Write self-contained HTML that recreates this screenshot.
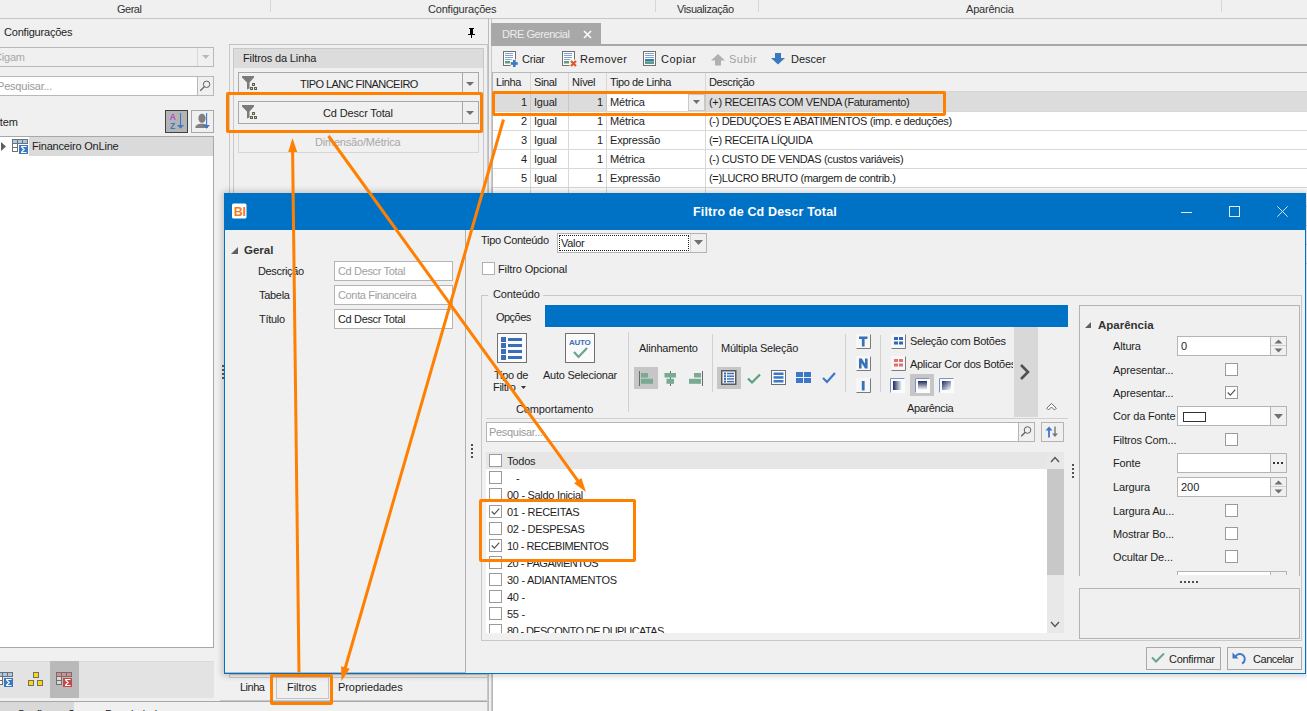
<!DOCTYPE html>
<html><head><meta charset="utf-8"><style>
html,body{margin:0;padding:0;width:1307px;height:711px;overflow:hidden;background:#f0f0f0;position:relative;font-family:"Liberation Sans", sans-serif;}
.a{position:absolute;}
.t{position:absolute;white-space:nowrap;font-family:"Liberation Sans", sans-serif;letter-spacing:-0.2px;}
svg.a{overflow:visible;}
</style></head><body>
<div class="t" style="left:117px;top:4px;font-size:11px;line-height:11px;color:#333;letter-spacing:-0.5px;">Geral</div><div class="t" style="left:428px;top:4px;font-size:11px;line-height:11px;color:#333;">Configurações</div><div class="t" style="left:677px;top:4px;font-size:11px;line-height:11px;color:#333;letter-spacing:-0.4px;">Visualização</div><div class="t" style="left:966px;top:4px;font-size:11px;line-height:11px;color:#333;">Aparência</div><div class="a" style="left:270px;top:0px;width:1px;height:12px;background:#d6d6d6;"></div><div class="a" style="left:655px;top:0px;width:1px;height:12px;background:#d6d6d6;"></div><div class="a" style="left:758px;top:0px;width:1px;height:12px;background:#d6d6d6;"></div><div class="a" style="left:1221px;top:0px;width:1px;height:12px;background:#d6d6d6;"></div><div class="a" style="left:0px;top:18px;width:1307px;height:1px;background:#c6c6c6;"></div><div class="t" style="left:4px;top:27px;font-size:11px;line-height:11px;color:#1e1e1e;">Configurações</div><svg class="a" style="left:467px;top:28px;" width="9" height="10" viewBox="0 0 9 10"><path d="M2 0h5v1h-1v5h2v1h-3v3h-1v-3h-3v-1h2v-5h-1z" fill="#000"/></svg><div class="a" style="left:488px;top:18px;width:1px;height:693px;background:#bcbcbc;"></div><div class="a" style="left:-1px;top:47px;width:215px;height:20px;background:#f0f0f0;border:1px solid #b8b8b8;box-sizing:border-box;"></div><div class="a" style="left:197px;top:48px;width:1px;height:18px;background:#d8d8d8;"></div><svg class="a" style="left:202px;top:55px;" width="8" height="4" viewBox="0 0 8 4"><path d="M0 0h7.5l-3.75 4z" fill="#b8b8b8"/></svg><div class="t" style="left:-6px;top:52px;font-size:11px;line-height:11px;color:#a8a8a8;">Cigam</div><div class="a" style="left:-1px;top:76px;width:215px;height:20px;background:#ffffff;border:1px solid #b8b8b8;box-sizing:border-box;"></div><div class="a" style="left:197px;top:76px;width:17px;height:20px;background:#f0f0f0;border:1px solid #b8b8b8;box-sizing:border-box;"></div><svg class="a" style="left:199px;top:79px;" width="12" height="13" viewBox="0 0 12 13"><circle cx="7.6" cy="5.3" r="3.2" fill="none" stroke="#606060" stroke-width="1"/><path d="M5.4 7.6L1.3 11.7" stroke="#606060" stroke-width="1.3"/></svg><div class="t" style="left:-3px;top:81px;font-size:11px;line-height:11px;color:#9a9a9a;">Pesquisar...</div><div class="t" style="left:-3px;top:117px;font-size:11px;line-height:11px;color:#1e1e1e;">Item</div><div class="a" style="left:165px;top:110px;width:23px;height:23px;background:#b4b4b4;border:1px solid #404040;box-sizing:border-box;"></div><svg class="a" style="left:169px;top:112px;" width="16" height="18" viewBox="0 0 16 18"><text x="0.8" y="8.3" font-family="Liberation Sans" font-weight="bold" font-size="8.5" fill="#b84cc8">A</text><text x="1" y="17" font-family="Liberation Sans" font-weight="bold" font-size="8.5" fill="#3c78c8">Z</text><path d="M11.5 1v12" stroke="#3c78c8" stroke-width="1.1"/><path d="M8 13l3.5 3.8 3.5-3.8z" fill="#3c78c8"/></svg><div class="a" style="left:191px;top:110px;width:23px;height:23px;background:#f0f0f0;border:1px solid #a8a8a8;box-sizing:border-box;"></div><svg class="a" style="left:194px;top:112px;" width="17" height="18" viewBox="0 0 17 18"><ellipse cx="8" cy="6.3" rx="3.6" ry="4.6" fill="#808080"/><path d="M1.2 16c0.5-3 2.5-4.3 6.8-4.3s5.5 1.3 6 4.3z" fill="#808080"/><path d="M12.6 1v12" stroke="#3c78c8" stroke-width="1.1"/><path d="M9.2 13l3.4 3.8 3.4-3.8z" fill="#3c78c8"/></svg><div class="a" style="left:-1px;top:136px;width:215px;height:512px;background:#ffffff;border:1px solid #a8a8a8;box-sizing:border-box;"></div><div class="a" style="left:29px;top:137px;width:184px;height:19px;background:#dadada;"></div><svg class="a" style="left:1px;top:142px;" width="5" height="9" viewBox="0 0 5 9"><path d="M0 0l5 4.5-5 4.5z" fill="#606060"/></svg><svg class="a" style="left:12px;top:139px;" width="17" height="15" viewBox="0 0 17 15"><rect x="0" y="0" width="16" height="5" fill="#707070"/><rect x="1" y="1" width="4" height="3" fill="#a8c8e8"/><rect x="6" y="1" width="4" height="3" fill="#a8c8e8"/><rect x="11" y="1" width="4" height="3" fill="#a8c8e8"/><rect x="0" y="4" width="6" height="9" fill="#707070"/><rect x="1" y="5" width="4" height="3" fill="#ffffff"/><rect x="1" y="9" width="4" height="3" fill="#ffffff"/><rect x="7" y="6" width="9" height="9" fill="#3a78c0"/><path d="M9 7.5h5.5M9 13.5h5.5M9.6 8l2.6 2.5-2.6 2.5" stroke="#fff" stroke-width="1.2" fill="none"/></svg><div class="t" style="left:32px;top:141px;font-size:11px;line-height:11px;color:#1e1e1e;">Financeiro OnLine</div><div class="a" style="left:0px;top:661px;width:214px;height:37px;background:#e3e3e3;"></div><div class="a" style="left:0px;top:661px;width:214px;height:1px;background:#dadada;"></div><div class="a" style="left:50px;top:661px;width:29px;height:37px;background:#b9b9b9;"></div><svg class="a" style="left:-3px;top:672px;" width="17" height="15" viewBox="0 0 17 15"><rect x="0" y="0" width="16" height="5" fill="#707070"/><rect x="1" y="1" width="4" height="3" fill="#a8c8e8"/><rect x="6" y="1" width="4" height="3" fill="#a8c8e8"/><rect x="11" y="1" width="4" height="3" fill="#a8c8e8"/><rect x="0" y="4" width="6" height="9" fill="#707070"/><rect x="1" y="5" width="4" height="3" fill="#ffffff"/><rect x="1" y="9" width="4" height="3" fill="#ffffff"/><rect x="7" y="6" width="9" height="9" fill="#3a78c0"/><path d="M9 7.5h5.5M9 13.5h5.5M9.6 8l2.6 2.5-2.6 2.5" stroke="#fff" stroke-width="1.2" fill="none"/></svg><svg class="a" style="left:28px;top:672px;" width="15" height="15" viewBox="0 0 15 15"><rect x="5.5" y="0.5" width="5" height="5" fill="#ffd800" stroke="#707070"/><rect x="0.5" y="8.5" width="5" height="5" fill="#ffd800" stroke="#707070"/><rect x="9.5" y="8.5" width="5" height="5" fill="#ffd800" stroke="#707070"/></svg><svg class="a" style="left:56px;top:672px;" width="17" height="15" viewBox="0 0 17 15"><rect x="0" y="0" width="16" height="5" fill="#707070"/><rect x="1" y="1" width="4" height="3" fill="#d88c8c"/><rect x="6" y="1" width="4" height="3" fill="#d88c8c"/><rect x="11" y="1" width="4" height="3" fill="#d88c8c"/><rect x="0" y="4" width="6" height="9" fill="#707070"/><rect x="1" y="5" width="4" height="3" fill="#d8d8d8"/><rect x="1" y="9" width="4" height="3" fill="#d8d8d8"/><rect x="7" y="6" width="9" height="9" fill="#c84848"/><path d="M9 7.5h5.5M9 13.5h5.5M9.6 8l2.6 2.5-2.6 2.5" stroke="#fff" stroke-width="1.2" fill="none"/></svg><div class="a" style="left:0px;top:701px;width:489px;height:1px;background:#a8a8a8;"></div><div class="a" style="left:0px;top:702px;width:74px;height:10px;background:#d9d9d9;"></div><div class="t" style="left:17px;top:709px;font-size:11px;line-height:11px;color:#1e1e1e;">Configurações</div><div class="t" style="left:105px;top:709px;font-size:11px;line-height:11px;color:#1e1e1e;">Propriedades</div><div class="a" style="left:229px;top:44px;width:259px;height:631px;border:1px solid #c8c8c8;box-sizing:border-box;"></div><div class="a" style="left:229px;top:674px;width:1px;height:4px;background:#c8c8c8;"></div><div class="a" style="left:487px;top:674px;width:1px;height:38px;background:#c8c8c8;"></div><div class="a" style="left:229px;top:44px;width:260px;height:1px;background:#c0c0c0;"></div><div class="a" style="left:233px;top:48px;width:251px;height:625px;border:1px solid #c8c8c8;box-sizing:border-box;"></div><div class="a" style="left:234px;top:49px;width:249px;height:19px;background:#dcdcdc;"></div><div class="t" style="left:243px;top:53px;font-size:11px;line-height:11px;color:#1e1e1e;letter-spacing:-0.13px;">Filtros da Linha</div><div class="a" style="left:238px;top:72px;width:241px;height:23px;background:#f0f0f0;border:1px solid #a8a8a8;box-sizing:border-box;"></div><div class="a" style="left:462px;top:73px;width:1px;height:21px;background:#a8a8a8;"></div><svg class="a" style="left:466px;top:82px;" width="8" height="4" viewBox="0 0 8 4"><path d="M0 0h8l-4 4z" fill="#707070"/></svg><svg class="a" style="left:242px;top:76px;" width="16" height="15" viewBox="0 0 16 15"><path d="M0 0h12v1.5l-4.5 5v6l-2.5 1v-7l-5-5z" fill="#7a7a7a"/><rect x="10" y="7" width="3" height="3" fill="#5a5e6a"/><rect x="11" y="8" width="1" height="1" fill="#ffe000"/><rect x="8" y="11" width="3" height="3" fill="#5a5e6a"/><rect x="9" y="12" width="1" height="1" fill="#ffe000"/><rect x="12" y="11" width="3" height="3" fill="#5a5e6a"/><rect x="13" y="12" width="1" height="1" fill="#ffe000"/></svg><div class="t" style="left:300px;top:79px;font-size:11px;line-height:11px;color:#1e1e1e;letter-spacing:-0.56px;">TIPO LANC FINANCEIRO</div><div class="a" style="left:238px;top:101px;width:241px;height:23px;background:#f0f0f0;border:1px solid #a8a8a8;box-sizing:border-box;"></div><div class="a" style="left:462px;top:102px;width:1px;height:21px;background:#a8a8a8;"></div><svg class="a" style="left:466px;top:111px;" width="8" height="4" viewBox="0 0 8 4"><path d="M0 0h8l-4 4z" fill="#707070"/></svg><svg class="a" style="left:242px;top:105px;" width="16" height="15" viewBox="0 0 16 15"><path d="M0 0h12v1.5l-4.5 5v6l-2.5 1v-7l-5-5z" fill="#7a7a7a"/><rect x="10" y="7" width="3" height="3" fill="#5a5e6a"/><rect x="11" y="8" width="1" height="1" fill="#ffe000"/><rect x="8" y="11" width="3" height="3" fill="#5a5e6a"/><rect x="9" y="12" width="1" height="1" fill="#ffe000"/><rect x="12" y="11" width="3" height="3" fill="#5a5e6a"/><rect x="13" y="12" width="1" height="1" fill="#ffe000"/></svg><div class="t" style="left:323px;top:108px;font-size:11px;line-height:11px;color:#1e1e1e;letter-spacing:-0.15px;">Cd Descr Total</div><div class="a" style="left:238px;top:130px;width:241px;height:23px;border:1px solid #d6d6d6;box-sizing:border-box;"></div><div class="t" style="left:315px;top:137px;font-size:11px;line-height:11px;color:#a8a8a8;letter-spacing:-0.2px;">Dimensão/Métrica</div><div class="a" style="left:229px;top:677px;width:260px;height:1px;background:#c8c8c8;"></div><div class="a" style="left:220px;top:700px;width:269px;height:1px;background:#c8c8c8;"></div><div class="t" style="left:240px;top:682px;font-size:11px;line-height:11px;color:#1e1e1e;letter-spacing:-0.5px;">Linha</div><div class="a" style="left:276px;top:677px;width:53px;height:22px;background:#f0f0f0;border:1px solid #c4c4c4;box-sizing:border-box;"></div><div class="t" style="left:287px;top:682px;font-size:11px;line-height:11px;color:#1e1e1e;letter-spacing:-0.07px;">Filtros</div><div class="t" style="left:338px;top:682px;font-size:11px;line-height:11px;color:#1e1e1e;letter-spacing:-0.07px;">Propriedades</div><div class="a" style="left:491px;top:19px;width:1px;height:693px;background:#c8c8c8;"></div><div class="a" style="left:491px;top:23px;width:110px;height:23px;background:#a8a8a8;"></div><div class="t" style="left:502px;top:29px;font-size:11px;line-height:11px;color:#ececec;letter-spacing:-0.45px;">DRE Gerencial</div><svg class="a" style="left:583px;top:30px;" width="9" height="9" viewBox="0 0 9 9"><path d="M1 1l7 7M8 1l-7 7" stroke="#fff" stroke-width="1.5"/></svg><div class="a" style="left:491px;top:44px;width:816px;height:1px;background:#a8a8a8;"></div><div class="a" style="left:491px;top:45px;width:816px;height:1px;background:#a8a8a8;"></div><svg class="a" style="left:503px;top:51px;" width="18" height="17" viewBox="0 0 18 17"><rect x="0.5" y="0.5" width="12" height="14" fill="#fff" stroke="#707070"/><rect x="2" y="2" width="8" height="1" fill="#7fa2d0"/><rect x="2" y="4" width="8" height="1" fill="#7fa2d0"/><rect x="2" y="6" width="8" height="1" fill="#7fa2d0"/><rect x="2" y="8" width="7" height="1" fill="#7fa2d0"/><rect x="2" y="10" width="5" height="2.5" fill="#5e9e80"/><rect x="7.5" y="8.5" width="8" height="8" fill="#f0f0f0"/><rect x="10" y="9" width="2.6" height="7" fill="#3a78c0"/><rect x="7.8" y="11.2" width="7" height="2.6" fill="#3a78c0"/></svg><div class="t" style="left:522px;top:54px;font-size:11px;line-height:11px;color:#1e1e1e;">Criar</div><svg class="a" style="left:562px;top:51px;" width="18" height="17" viewBox="0 0 18 17"><rect x="0.5" y="0.5" width="12" height="14" fill="#fff" stroke="#707070"/><rect x="2" y="2" width="8" height="1" fill="#7fa2d0"/><rect x="2" y="4" width="8" height="1" fill="#7fa2d0"/><rect x="2" y="6" width="8" height="1" fill="#7fa2d0"/><rect x="2" y="8" width="7" height="1" fill="#7fa2d0"/><rect x="2" y="10" width="5" height="2.5" fill="#5e9e80"/><rect x="7.5" y="8.5" width="8" height="8" fill="#f0f0f0"/><path d="M9 10l5 5M14 10l-5 5" stroke="#e0582c" stroke-width="2.2"/></svg><div class="t" style="left:580px;top:54px;font-size:11px;line-height:11px;color:#1e1e1e;letter-spacing:0.4px;">Remover</div><svg class="a" style="left:643px;top:51px;" width="14" height="16" viewBox="0 0 14 16"><rect x="0.5" y="0.5" width="12" height="14" fill="#fff" stroke="#707070"/><rect x="2" y="2" width="9" height="1" fill="#7fa2d0"/><rect x="2" y="4" width="9" height="1" fill="#7fa2d0"/><rect x="2" y="6" width="9" height="1" fill="#7fa2d0"/><rect x="2" y="8" width="9" height="2.5" fill="#3a78c0"/><rect x="2" y="10.5" width="9" height="2.5" fill="#5e9e80"/></svg><div class="t" style="left:661px;top:54px;font-size:11px;line-height:11px;color:#1e1e1e;letter-spacing:0.5px;">Copiar</div><svg class="a" style="left:711px;top:54px;" width="15" height="12" viewBox="0 0 15 12"><path d="M7 0l7 6.5h-4v5h-6v-5h-4z" fill="#b0b0b0"/></svg><div class="t" style="left:729px;top:54px;font-size:11px;line-height:11px;color:#a0a0a0;letter-spacing:0.5px;">Subir</div><svg class="a" style="left:771px;top:53px;" width="15" height="12" viewBox="0 0 15 12"><path d="M4 0h6v5h4l-7 6.5-7-6.5h4z" fill="#3c78c0"/></svg><div class="t" style="left:791px;top:54px;font-size:11px;line-height:11px;color:#1e1e1e;letter-spacing:0px;">Descer</div><div class="a" style="left:492px;top:72px;width:815px;height:640px;background:#ffffff;"></div><div class="a" style="left:492px;top:72px;width:815px;height:1px;background:#b8b8b8;"></div><div class="a" style="left:492px;top:72px;width:1px;height:640px;background:#b8b8b8;"></div><div class="a" style="left:493px;top:73px;width:814px;height:18px;background:#f0f0f0;"></div><div class="a" style="left:493px;top:91px;width:814px;height:1px;background:#d4d4d4;"></div><div class="a" style="left:530px;top:73px;width:1px;height:128px;background:#d8d8d8;"></div><div class="a" style="left:568px;top:73px;width:1px;height:128px;background:#d8d8d8;"></div><div class="a" style="left:606px;top:73px;width:1px;height:128px;background:#d8d8d8;"></div><div class="a" style="left:705px;top:73px;width:1px;height:128px;background:#d8d8d8;"></div><div class="t" style="left:496px;top:77px;font-size:11px;line-height:11px;color:#1e1e1e;letter-spacing:-0.4px;">Linha</div><div class="t" style="left:534px;top:77px;font-size:11px;line-height:11px;color:#1e1e1e;letter-spacing:-0.4px;">Sinal</div><div class="t" style="left:572px;top:77px;font-size:11px;line-height:11px;color:#1e1e1e;letter-spacing:-0.4px;">Nível</div><div class="t" style="left:610px;top:77px;font-size:11px;line-height:11px;color:#1e1e1e;letter-spacing:-0.4px;">Tipo de Linha</div><div class="t" style="left:709px;top:77px;font-size:11px;line-height:11px;color:#1e1e1e;letter-spacing:-0.4px;">Descrição</div><div class="a" style="left:493px;top:92px;width:814px;height:19px;background:#dcdcdc;"></div><div class="a" style="left:607px;top:94px;width:98px;height:17px;background:#ffffff;"></div><div class="a" style="left:688px;top:94px;width:17px;height:17px;background:#f0f0f0;border:1px solid #c8c8c8;box-sizing:border-box;"></div><svg class="a" style="left:693px;top:100px;" width="8" height="4" viewBox="0 0 8 4"><path d="M0 0h7l-3.5 4z" fill="#707070"/></svg><div class="a" style="left:493px;top:225px;width:814px;height:1px;background:#d8d8d8;"></div><div class="a" style="left:493px;top:244px;width:814px;height:1px;background:#d8d8d8;"></div><div class="a" style="left:493px;top:263px;width:814px;height:1px;background:#d8d8d8;"></div><div class="a" style="left:493px;top:111px;width:814px;height:1px;background:#d8d8d8;"></div><div class="t" style="left:480px;top:97px;font-size:11px;line-height:11px;color:#1e1e1e;letter-spacing:0px;width:47px;text-align:right;">1</div><div class="t" style="left:534px;top:97px;font-size:11px;line-height:11px;color:#1e1e1e;letter-spacing:-0.2px;">Igual</div><div class="t" style="left:560px;top:97px;font-size:11px;line-height:11px;color:#1e1e1e;letter-spacing:0px;width:43px;text-align:right;">1</div><div class="t" style="left:610px;top:97px;font-size:11px;line-height:11px;color:#1e1e1e;letter-spacing:-0.2px;">Métrica</div><div class="t" style="left:709px;top:97px;font-size:11px;line-height:11px;color:#1e1e1e;letter-spacing:-0.35px;">(+) RECEITAS COM VENDA (Faturamento)</div><div class="a" style="left:493px;top:130px;width:814px;height:1px;background:#d8d8d8;"></div><div class="t" style="left:480px;top:116px;font-size:11px;line-height:11px;color:#1e1e1e;letter-spacing:0px;width:47px;text-align:right;">2</div><div class="t" style="left:534px;top:116px;font-size:11px;line-height:11px;color:#1e1e1e;letter-spacing:-0.2px;">Igual</div><div class="t" style="left:560px;top:116px;font-size:11px;line-height:11px;color:#1e1e1e;letter-spacing:0px;width:43px;text-align:right;">1</div><div class="t" style="left:610px;top:116px;font-size:11px;line-height:11px;color:#1e1e1e;letter-spacing:-0.2px;">Métrica</div><div class="t" style="left:709px;top:116px;font-size:11px;line-height:11px;color:#1e1e1e;letter-spacing:-0.35px;">(-) DEDUÇOES E ABATIMENTOS (imp. e deduções)</div><div class="a" style="left:493px;top:149px;width:814px;height:1px;background:#d8d8d8;"></div><div class="t" style="left:480px;top:135px;font-size:11px;line-height:11px;color:#1e1e1e;letter-spacing:0px;width:47px;text-align:right;">3</div><div class="t" style="left:534px;top:135px;font-size:11px;line-height:11px;color:#1e1e1e;letter-spacing:-0.2px;">Igual</div><div class="t" style="left:560px;top:135px;font-size:11px;line-height:11px;color:#1e1e1e;letter-spacing:0px;width:43px;text-align:right;">1</div><div class="t" style="left:610px;top:135px;font-size:11px;line-height:11px;color:#1e1e1e;letter-spacing:-0.2px;">Expressão</div><div class="t" style="left:709px;top:135px;font-size:11px;line-height:11px;color:#1e1e1e;letter-spacing:-0.35px;">(=) RECEITA LÍQUIDA</div><div class="a" style="left:493px;top:168px;width:814px;height:1px;background:#d8d8d8;"></div><div class="t" style="left:480px;top:154px;font-size:11px;line-height:11px;color:#1e1e1e;letter-spacing:0px;width:47px;text-align:right;">4</div><div class="t" style="left:534px;top:154px;font-size:11px;line-height:11px;color:#1e1e1e;letter-spacing:-0.2px;">Igual</div><div class="t" style="left:560px;top:154px;font-size:11px;line-height:11px;color:#1e1e1e;letter-spacing:0px;width:43px;text-align:right;">1</div><div class="t" style="left:610px;top:154px;font-size:11px;line-height:11px;color:#1e1e1e;letter-spacing:-0.2px;">Métrica</div><div class="t" style="left:709px;top:154px;font-size:11px;line-height:11px;color:#1e1e1e;letter-spacing:-0.35px;">(-) CUSTO DE VENDAS (custos variáveis)</div><div class="a" style="left:493px;top:187px;width:814px;height:1px;background:#d8d8d8;"></div><div class="t" style="left:480px;top:173px;font-size:11px;line-height:11px;color:#1e1e1e;letter-spacing:0px;width:47px;text-align:right;">5</div><div class="t" style="left:534px;top:173px;font-size:11px;line-height:11px;color:#1e1e1e;letter-spacing:-0.2px;">Igual</div><div class="t" style="left:560px;top:173px;font-size:11px;line-height:11px;color:#1e1e1e;letter-spacing:0px;width:43px;text-align:right;">1</div><div class="t" style="left:610px;top:173px;font-size:11px;line-height:11px;color:#1e1e1e;letter-spacing:-0.2px;">Expressão</div><div class="t" style="left:709px;top:173px;font-size:11px;line-height:11px;color:#1e1e1e;letter-spacing:-0.35px;">(=)LUCRO BRUTO (margem de contrib.)</div><div class="a" style="left:493px;top:206px;width:814px;height:1px;background:#d8d8d8;"></div><div class="t" style="left:480px;top:192px;font-size:11px;line-height:11px;color:#1e1e1e;letter-spacing:0px;width:47px;text-align:right;">6</div><div class="t" style="left:534px;top:192px;font-size:11px;line-height:11px;color:#1e1e1e;letter-spacing:-0.2px;">Igual</div><div class="t" style="left:560px;top:192px;font-size:11px;line-height:11px;color:#1e1e1e;letter-spacing:0px;width:43px;text-align:right;">1</div><div class="t" style="left:610px;top:192px;font-size:11px;line-height:11px;color:#1e1e1e;letter-spacing:-0.2px;">Métrica</div><div class="t" style="left:709px;top:192px;font-size:11px;line-height:11px;color:#1e1e1e;letter-spacing:-0.35px;">(-) DESPESAS OPERACIONAIS (custos fixos)</div><div class="a" style="left:530px;top:92px;width:1px;height:19px;background:#c8c8c8;"></div><div class="a" style="left:568px;top:92px;width:1px;height:19px;background:#c8c8c8;"></div><div class="a" style="left:606px;top:92px;width:1px;height:19px;background:#c8c8c8;"></div><div class="a" style="left:705px;top:92px;width:1px;height:19px;background:#c8c8c8;"></div><div class="a" style="left:219px;top:189px;width:1092px;height:490px;box-shadow:0 0 6px 2px rgba(0,0,0,0.18);left:224px;top:193px;width:1082px;height:481px;"></div><div class="a" style="left:224px;top:193px;width:1082px;height:481px;background:#f0f0f0;border:1px solid #0072c6;box-sizing:border-box;"></div><div class="a" style="left:224px;top:193px;width:1082px;height:37px;background:#0072c6;"></div><svg class="a" style="left:232px;top:203px;" width="15" height="16" viewBox="0 0 15 16"><rect x="0" y="0.5" width="14.5" height="15" rx="1.5" fill="#fff"/><text x="1.8" y="13.2" font-family="Liberation Sans" font-weight="bold" font-size="12.5" letter-spacing="-0.4" fill="#f47a1e">BI</text></svg><div class="t" style="left:693px;top:206px;font-size:12.5px;line-height:12.5px;color:#ffffff;font-weight:bold;letter-spacing:0.16px;">Filtro de Cd Descr Total</div><div class="a" style="left:1181px;top:212px;width:11px;height:1px;background:#e8e8e8;"></div><div class="a" style="left:1229px;top:206px;width:11px;height:11px;border:1px solid #e8e8e8;box-sizing:border-box;"></div><svg class="a" style="left:1277px;top:206px;" width="11" height="11" viewBox="0 0 11 11"><path d="M0.3 0.3l10.4 10.4M10.7 0.3l-10.4 10.4" stroke="#e8eef8" stroke-width="0.9"/></svg><div class="a" style="left:465px;top:230px;width:1px;height:443px;background:#b0b0b0;"></div><div class="a" style="left:225px;top:672px;width:241px;height:1px;background:#b8b8b8;"></div><svg class="a" style="left:231px;top:247px;" width="7" height="7" viewBox="0 0 7 7"><path d="M7 0v7h-7z" fill="#606060"/></svg><div class="t" style="left:244px;top:245px;font-size:11.5px;line-height:11.5px;color:#333;font-weight:bold;letter-spacing:0px;">Geral</div><div class="t" style="left:258px;top:266px;font-size:11px;line-height:11px;color:#1e1e1e;letter-spacing:-0.35px;">Descrição</div><div class="t" style="left:259px;top:290px;font-size:11px;line-height:11px;color:#1e1e1e;letter-spacing:-0.3px;">Tabela</div><div class="t" style="left:259px;top:314px;font-size:11px;line-height:11px;color:#1e1e1e;letter-spacing:-0.3px;">Título</div><div class="a" style="left:334px;top:261px;width:119px;height:20px;background:#ffffff;border:1px solid #b4b4b4;box-sizing:border-box;"></div><div class="t" style="left:338px;top:266px;font-size:11px;line-height:11px;color:#a0a0a0;letter-spacing:-0.35px;">Cd Descr Total</div><div class="a" style="left:334px;top:285px;width:119px;height:20px;background:#ffffff;border:1px solid #b4b4b4;box-sizing:border-box;"></div><div class="t" style="left:338px;top:290px;font-size:11px;line-height:11px;color:#a0a0a0;letter-spacing:-0.35px;">Conta Financeira</div><div class="a" style="left:334px;top:309px;width:119px;height:20px;background:#ffffff;border:1px solid #b4b4b4;box-sizing:border-box;"></div><div class="t" style="left:338px;top:314px;font-size:11px;line-height:11px;color:#1e1e1e;letter-spacing:-0.35px;">Cd Descr Total</div><div class="t" style="left:481px;top:235px;font-size:11px;line-height:11px;color:#1e1e1e;letter-spacing:-0.31px;">Tipo Conteúdo</div><div class="a" style="left:557px;top:233px;width:150px;height:20px;background:#ffffff;border:1px solid #b4b4b4;box-sizing:border-box;"></div><div class="a" style="left:690px;top:234px;width:16px;height:18px;background:#f0f0f0;"></div><div class="a" style="left:690px;top:234px;width:1px;height:18px;background:#d0d0d0;"></div><svg class="a" style="left:694px;top:240px;" width="9" height="5" viewBox="0 0 9 5"><path d="M0 0h9l-4.5 5z" fill="#707070"/></svg><div class="a" style="left:559px;top:235px;width:130px;height:16px;border:1px dotted #202020;box-sizing:border-box;"></div><div class="t" style="left:561px;top:238px;font-size:11px;line-height:11px;color:#1e1e1e;letter-spacing:-0.3px;">Valor</div><div class="a" style="left:482px;top:262px;width:13px;height:13px;background:#ffffff;border:1px solid #b0b0b0;box-sizing:border-box;"></div><div class="t" style="left:498px;top:264px;font-size:11px;line-height:11px;color:#1e1e1e;letter-spacing:-0.12px;">Filtro Opcional</div><div class="a" style="left:481px;top:295px;width:821px;height:346px;border:1px solid #c8c8c8;box-sizing:border-box;"></div><div class="a" style="left:488px;top:289px;width:55px;height:12px;background:#f0f0f0;"></div><div class="t" style="left:493px;top:289px;font-size:11px;line-height:11px;color:#1e1e1e;letter-spacing:-0.13px;">Conteúdo</div><div class="a" style="left:545px;top:305px;width:523px;height:22px;background:#0072c6;"></div><div class="t" style="left:496px;top:312px;font-size:11px;line-height:11px;color:#1e1e1e;letter-spacing:-0.54px;">Opções</div><div class="a" style="left:486px;top:418px;width:582px;height:1px;background:#d0d0d0;"></div><svg class="a" style="left:497px;top:333px;" width="30" height="30" viewBox="0 0 30 30"><rect x="0.5" y="0.5" width="29" height="29" fill="#fafafa" stroke="#707070"/><rect x="4" y="4" width="5" height="5" fill="#3a6fb8"/><rect x="11" y="5" width="14" height="3" fill="#3a6fb8"/><rect x="4" y="10" width="5" height="5" fill="#3a6fb8"/><rect x="11" y="11" width="14" height="3" fill="#3a6fb8"/><rect x="4" y="16" width="5" height="5" fill="#3a6fb8"/><rect x="11" y="17" width="14" height="3" fill="#3a6fb8"/><rect x="4" y="22" width="5" height="5" fill="#3a6fb8"/><rect x="11" y="23" width="14" height="3" fill="#3a6fb8"/></svg><div class="t" style="left:494px;top:370px;font-size:11px;line-height:11px;color:#1e1e1e;letter-spacing:-0.3px;">Tipo de</div><div class="t" style="left:493px;top:382px;font-size:11px;line-height:11px;color:#1e1e1e;letter-spacing:-0.3px;">Filtro</div><svg class="a" style="left:521px;top:386px;" width="5" height="3" viewBox="0 0 5 3"><path d="M0 0h5l-2.5 3z" fill="#333"/></svg><svg class="a" style="left:565px;top:333px;" width="31" height="30" viewBox="0 0 31 30"><rect x="0.5" y="0.5" width="29" height="29" fill="#fafafa" stroke="#707070"/><text x="4" y="11.7" font-family="Liberation Sans" font-weight="bold" font-size="8" letter-spacing="-0.25" fill="#3a70b8">AUTO</text><path d="M9 19l4.5 5 8.5-9" stroke="#6aa58a" stroke-width="2.2" fill="none"/></svg><div class="t" style="left:543px;top:370px;font-size:11px;line-height:11px;color:#1e1e1e;letter-spacing:-0.25px;">Auto Selecionar</div><div class="t" style="left:516px;top:404px;font-size:11px;line-height:11px;color:#1e1e1e;letter-spacing:-0.13px;">Comportamento</div><div class="a" style="left:628px;top:332px;width:1px;height:80px;background:#d0d0d0;"></div><div class="t" style="left:639px;top:343px;font-size:11px;line-height:11px;color:#1e1e1e;letter-spacing:-0.23px;">Alinhamento</div><div class="a" style="left:634px;top:367px;width:24px;height:22px;background:#c6c6c6;"></div><svg class="a" style="left:639px;top:371px;" width="15" height="15" viewBox="0 0 15 15"><path d="M0.5 0v15" stroke="#6a6a6a" stroke-width="1"/><rect x="2" y="2" width="7" height="4.5" fill="#79ab93"/><rect x="2" y="7.8" width="12" height="5" fill="#79ab93"/></svg><svg class="a" style="left:664px;top:371px;" width="13" height="15" viewBox="0 0 13 15"><path d="M6.5 0v15" stroke="#6a6a6a" stroke-width="1"/><rect x="0.5" y="2" width="11.5" height="4.5" fill="#79ab93"/><rect x="2.5" y="7.8" width="7.5" height="5" fill="#79ab93"/></svg><svg class="a" style="left:688px;top:371px;" width="15" height="15" viewBox="0 0 15 15"><path d="M14.5 0v15" stroke="#6a6a6a" stroke-width="1"/><rect x="6" y="2" width="7" height="4.5" fill="#79ab93"/><rect x="1" y="7.8" width="12" height="5" fill="#79ab93"/></svg><div class="a" style="left:712px;top:334px;width:1px;height:58px;background:#d0d0d0;"></div><div class="t" style="left:721px;top:343px;font-size:11px;line-height:11px;color:#1e1e1e;letter-spacing:-0.23px;">Múltipla Seleção</div><div class="a" style="left:717px;top:367px;width:24px;height:22px;background:#c6c6c6;"></div><svg class="a" style="left:721px;top:370px;" width="16" height="15" viewBox="0 0 16 15"><rect x="0.75" y="0.75" width="14" height="13.5" fill="#f4f4f4" stroke="#5a5a5a" stroke-width="1.5"/><rect x="3" y="2.5" width="2" height="2" fill="#3a6fb8"/><rect x="6" y="2.8" width="7" height="1.4" fill="#3a6fb8"/><rect x="3" y="5.2" width="2" height="2" fill="#3a6fb8"/><rect x="6" y="5.5" width="7" height="1.4" fill="#3a6fb8"/><rect x="3" y="7.9" width="2" height="2" fill="#3a6fb8"/><rect x="6" y="8.2" width="7" height="1.4" fill="#3a6fb8"/><rect x="3" y="10.6" width="2" height="2" fill="#3a6fb8"/><rect x="6" y="10.9" width="7" height="1.4" fill="#3a6fb8"/></svg><svg class="a" style="left:747px;top:373px;" width="14" height="11" viewBox="0 0 14 11"><path d="M1 5.5l4 4 8-8" stroke="#59a07c" stroke-width="2.2" fill="none"/></svg><svg class="a" style="left:771px;top:370px;" width="15" height="15" viewBox="0 0 15 15"><rect x="0.5" y="0.5" width="14" height="14" fill="#fff" stroke="#6e6e6e"/><rect x="2.5" y="2.5" width="10" height="2.5" fill="#3c78c8"/><rect x="2.5" y="6.2" width="10" height="2.5" fill="#3c78c8"/><rect x="2.5" y="10" width="10" height="2.5" fill="#3c78c8"/></svg><svg class="a" style="left:796px;top:372px;" width="15" height="11" viewBox="0 0 15 11"><rect x="0" y="0" width="7" height="5" fill="#3c78c8"/><rect x="8" y="0" width="7" height="5" fill="#3c78c8"/><rect x="0" y="6" width="7" height="5" fill="#3c78c8"/><rect x="8" y="6" width="7" height="5" fill="#3c78c8"/></svg><svg class="a" style="left:822px;top:372px;" width="14" height="12" viewBox="0 0 14 12"><path d="M1 6l4 4 8-9" stroke="#3c78c8" stroke-width="2.2" fill="none"/></svg><div class="a" style="left:845px;top:334px;width:1px;height:58px;background:#d0d0d0;"></div><svg class="a" style="left:856px;top:334px;" width="16" height="15" viewBox="0 0 16 15"><rect x="0" y="0" width="15" height="14" fill="#f7f7f7"/><path d="M14.5 0.5v14h-14" stroke="#7a7a7a" fill="none"/><path d="M3 2.5h8.5v2.6h-2.9v7.4h-2.7v-7.4h-2.9z" fill="#3a70b8"/></svg><svg class="a" style="left:856px;top:356px;" width="16" height="15" viewBox="0 0 16 15"><rect x="0" y="0" width="15" height="14" fill="#f7f7f7"/><path d="M14.5 0.5v14h-14" stroke="#7a7a7a" fill="none"/><path d="M3 2.5h2.8l3.2 5.2v-5.2h2.6v10h-2.6l-3.4-5.4v5.4h-2.6z" fill="#3a70b8"/></svg><svg class="a" style="left:856px;top:378px;" width="16" height="15" viewBox="0 0 16 15"><rect x="0" y="0" width="15" height="14" fill="#f7f7f7"/><path d="M14.5 0.5v14h-14" stroke="#7a7a7a" fill="none"/><rect x="5.8" y="3" width="2.8" height="9.5" fill="#3a70b8"/></svg><div class="a" style="left:880px;top:335px;width:1px;height:57px;background:#d0d0d0;"></div><svg class="a" style="left:891px;top:334px;" width="16" height="15" viewBox="0 0 16 15"><rect x="0" y="0" width="15" height="14" fill="#f7f7f7"/><path d="M14.5 0.5v14h-14" stroke="#7a7a7a" fill="none"/><rect x="3" y="3" width="4" height="3" fill="#2f68b4"/><rect x="8" y="3" width="4" height="3" fill="#2f68b4"/><rect x="3" y="7.5" width="4" height="3" fill="#2f68b4"/><rect x="8" y="7.5" width="4" height="3" fill="#2f68b4"/></svg><div class="t" style="left:910px;top:336px;font-size:11px;line-height:11px;color:#1e1e1e;letter-spacing:-0.29px;">Seleção com Botões</div><svg class="a" style="left:891px;top:356px;" width="16" height="15" viewBox="0 0 16 15"><rect x="0" y="0" width="15" height="14" fill="#f7f7f7"/><path d="M14.5 0.5v14h-14" stroke="#7a7a7a" fill="none"/><rect x="3" y="3" width="4" height="3" fill="#e07070"/><rect x="8" y="3" width="4" height="3" fill="#e07070"/><rect x="3" y="7.5" width="4" height="3" fill="#e07070"/><rect x="8" y="7.5" width="4" height="3" fill="#e07070"/></svg><div class="a" style="left:905px;top:350px;width:108px;height:22px;overflow:hidden;"><div class="t" style="left:5px;top:9px;font-size:11px;line-height:11px;color:#1e1e1e;letter-spacing:-0.3px;">Aplicar Cor dos Botões</div></div><div class="a" style="left:910px;top:374px;width:24px;height:22px;background:#c6c6c6;"></div><svg class="a" style="left:890px;top:378px;" width="15" height="15" viewBox="0 0 15 15"><defs><linearGradient id="g0" x1="0" y1="0" x2="1" y2="0"><stop offset="0" stop-color="#1e2a5a"/><stop offset="1" stop-color="#ffffff"/></linearGradient></defs><rect x="0" y="0" width="15" height="15" fill="#fbfbfb"/><path d="M0.5 14.5v-14h14" stroke="#8090c8" fill="none"/><rect x="3" y="3" width="9" height="9" fill="url(#g0)"/></svg><svg class="a" style="left:915px;top:378px;" width="15" height="15" viewBox="0 0 15 15"><defs><linearGradient id="g1" x1="0" y1="0" x2="0" y2="1"><stop offset="0" stop-color="#1e2a5a"/><stop offset="1" stop-color="#ffffff"/></linearGradient></defs><rect x="0" y="0" width="15" height="15" fill="#fbfbfb"/><path d="M0.5 14.5v-14h14" stroke="#8090c8" fill="none"/><rect x="3" y="3" width="9" height="9" fill="url(#g1)"/></svg><svg class="a" style="left:939px;top:378px;" width="15" height="15" viewBox="0 0 15 15"><defs><linearGradient id="g2" x1="0" y1="0" x2="1" y2="1"><stop offset="0" stop-color="#1e2a5a"/><stop offset="1" stop-color="#ffffff"/></linearGradient></defs><rect x="0" y="0" width="15" height="15" fill="#fbfbfb"/><path d="M0.5 14.5v-14h14" stroke="#8090c8" fill="none"/><rect x="3" y="3" width="9" height="9" fill="url(#g2)"/></svg><div class="t" style="left:907px;top:403px;font-size:11px;line-height:11px;color:#1e1e1e;letter-spacing:-0.35px;">Aparência</div><div class="a" style="left:1014px;top:327px;width:24px;height:90px;background:#d8d8d8;"></div><svg class="a" style="left:1019px;top:364px;" width="12" height="16" viewBox="0 0 12 16"><path d="M2 1l7 7-7 7" stroke="#505050" stroke-width="2.6" fill="none"/></svg><svg class="a" style="left:1046px;top:403px;" width="12" height="9" viewBox="0 0 12 9"><path d="M0.7 5.2L5.5 0.5l4.8 4.7-1.8 1.8-3-3-3 3z" fill="#fff" stroke="#555" stroke-width="0.9" stroke-linejoin="round"/></svg><div class="a" style="left:486px;top:422px;width:549px;height:20px;background:#ffffff;border:1px solid #b4b4b4;box-sizing:border-box;"></div><div class="a" style="left:1018px;top:422px;width:17px;height:20px;background:#f0f0f0;border:1px solid #b4b4b4;box-sizing:border-box;"></div><svg class="a" style="left:1020px;top:425px;" width="12" height="13" viewBox="0 0 12 13"><circle cx="7.5" cy="5" r="3.3" fill="none" stroke="#606060" stroke-width="1"/><path d="M5.2 7.3L1.2 11.3" stroke="#606060" stroke-width="1.3"/></svg><div class="t" style="left:489px;top:427px;font-size:11px;line-height:11px;color:#9a9a9a;letter-spacing:-0.3px;">Pesquisar...</div><div class="a" style="left:1041px;top:422px;width:23px;height:20px;background:#f0f0f0;border:1px solid #b4b4b4;box-sizing:border-box;"></div><svg class="a" style="left:1045px;top:426px;" width="15" height="12" viewBox="0 0 15 12"><path d="M4 11.5V3" stroke="#3c78c8" stroke-width="1.8"/><path d="M0.5 4.5L4 0.5l3.5 4z" fill="#3c78c8"/><path d="M10 0.5V8" stroke="#777" stroke-width="1.4"/><path d="M7 7.5l3 3.5 3-3.5z" fill="#777"/></svg><div class="a" style="left:486px;top:452px;width:561px;height:181px;background:#ffffff;"></div><div class="a" style="left:486px;top:452px;width:561px;height:17px;background:#e6e6e6;"></div><div class="a" style="left:1047px;top:452px;width:17px;height:181px;background:#e8e8e8;"></div><div class="a" style="left:1047px;top:469px;width:17px;height:106px;background:#c8c8c8;"></div><svg class="a" style="left:1050px;top:456px;" width="10" height="7" viewBox="0 0 10 7"><path d="M1 6l4-4.5 4 4.5" stroke="#555" stroke-width="1.4" fill="none"/></svg><svg class="a" style="left:1050px;top:621px;" width="10" height="7" viewBox="0 0 10 7"><path d="M1 1l4 4.5 4-4.5" stroke="#555" stroke-width="1.4" fill="none"/></svg><div class="a" style="left:489px;top:454px;width:13px;height:13px;background:#ffffff;border:1px solid #9a9a9a;box-sizing:border-box;"></div><div class="t" style="left:507px;top:456px;font-size:11px;line-height:11px;color:#1e1e1e;letter-spacing:-0.2px;">Todos</div><div class="a" style="left:486px;top:469px;width:561px;height:164px;overflow:hidden;"><div class="a" style="left:3px;top:2px;width:13px;height:13px;background:#ffffff;border:1px solid #9a9a9a;box-sizing:border-box;"></div><div class="t" style="left:30px;top:4px;font-size:11px;line-height:11px;color:#1e1e1e;letter-spacing:-0.3px;">-</div><div class="a" style="left:3px;top:19px;width:13px;height:13px;background:#ffffff;border:1px solid #9a9a9a;box-sizing:border-box;"></div><div class="t" style="left:21px;top:21px;font-size:11px;line-height:11px;color:#1e1e1e;letter-spacing:-0.3px;">00 - Saldo Inicial</div><div class="a" style="left:3px;top:36px;width:13px;height:13px;background:#ffffff;border:1px solid #9a9a9a;box-sizing:border-box;"></div><svg class="a" style="left:5px;top:39px;" width="9" height="7" viewBox="0 0 9 7"><path d="M0.7 3.5l2.6 2.6 5-5.4" stroke="#555" stroke-width="1.2" fill="none"/></svg><div class="t" style="left:21px;top:38px;font-size:11px;line-height:11px;color:#1e1e1e;letter-spacing:-0.3px;">01 - RECEITAS</div><div class="a" style="left:3px;top:53px;width:13px;height:13px;background:#ffffff;border:1px solid #9a9a9a;box-sizing:border-box;"></div><div class="t" style="left:21px;top:55px;font-size:11px;line-height:11px;color:#1e1e1e;letter-spacing:-0.3px;">02 - DESPESAS</div><div class="a" style="left:3px;top:70px;width:13px;height:13px;background:#ffffff;border:1px solid #9a9a9a;box-sizing:border-box;"></div><svg class="a" style="left:5px;top:73px;" width="9" height="7" viewBox="0 0 9 7"><path d="M0.7 3.5l2.6 2.6 5-5.4" stroke="#555" stroke-width="1.2" fill="none"/></svg><div class="t" style="left:21px;top:72px;font-size:11px;line-height:11px;color:#1e1e1e;letter-spacing:-0.5px;">10 - RECEBIMENTOS</div><div class="a" style="left:3px;top:87px;width:13px;height:13px;background:#ffffff;border:1px solid #9a9a9a;box-sizing:border-box;"></div><div class="t" style="left:21px;top:89px;font-size:11px;line-height:11px;color:#1e1e1e;letter-spacing:-0.5px;">20 - PAGAMENTOS</div><div class="a" style="left:3px;top:104px;width:13px;height:13px;background:#ffffff;border:1px solid #9a9a9a;box-sizing:border-box;"></div><div class="t" style="left:21px;top:106px;font-size:11px;line-height:11px;color:#1e1e1e;letter-spacing:-0.3px;">30 - ADIANTAMENTOS</div><div class="a" style="left:3px;top:121px;width:13px;height:13px;background:#ffffff;border:1px solid #9a9a9a;box-sizing:border-box;"></div><div class="t" style="left:21px;top:123px;font-size:11px;line-height:11px;color:#1e1e1e;letter-spacing:-0.3px;">40 -</div><div class="a" style="left:3px;top:138px;width:13px;height:13px;background:#ffffff;border:1px solid #9a9a9a;box-sizing:border-box;"></div><div class="t" style="left:21px;top:140px;font-size:11px;line-height:11px;color:#1e1e1e;letter-spacing:-0.3px;">55 -</div><div class="a" style="left:3px;top:155px;width:13px;height:13px;background:#ffffff;border:1px solid #9a9a9a;box-sizing:border-box;"></div><div class="t" style="left:21px;top:157px;font-size:11px;line-height:11px;color:#1e1e1e;letter-spacing:-0.6px;">80 - DESCONTO DE DUPLICATAS</div></div><div class="a" style="left:471px;top:444px;width:2px;height:2px;background:#505050;"></div><div class="a" style="left:1072px;top:464px;width:2px;height:2px;background:#505050;"></div><div class="a" style="left:222px;top:365px;width:2px;height:2px;background:#505050;"></div><div class="a" style="left:471px;top:448px;width:2px;height:2px;background:#505050;"></div><div class="a" style="left:1072px;top:468px;width:2px;height:2px;background:#505050;"></div><div class="a" style="left:222px;top:369px;width:2px;height:2px;background:#505050;"></div><div class="a" style="left:471px;top:452px;width:2px;height:2px;background:#505050;"></div><div class="a" style="left:1072px;top:472px;width:2px;height:2px;background:#505050;"></div><div class="a" style="left:222px;top:373px;width:2px;height:2px;background:#505050;"></div><div class="a" style="left:471px;top:456px;width:2px;height:2px;background:#505050;"></div><div class="a" style="left:1072px;top:476px;width:2px;height:2px;background:#505050;"></div><div class="a" style="left:222px;top:377px;width:2px;height:2px;background:#505050;"></div><div class="a" style="left:1079px;top:305px;width:221px;height:1px;background:#b4b4b4;"></div><div class="a" style="left:1079px;top:305px;width:1px;height:271px;background:#b4b4b4;"></div><div class="a" style="left:1299px;top:305px;width:1px;height:271px;background:#b4b4b4;"></div><svg class="a" style="left:1085px;top:322px;" width="6" height="6" viewBox="0 0 6 6"><path d="M6 0v6h-6z" fill="#606060"/></svg><div class="t" style="left:1098px;top:320px;font-size:11.5px;line-height:11.5px;color:#333;font-weight:bold;letter-spacing:0px;">Aparência</div><div class="a" style="left:1081px;top:306px;width:218px;height:269px;overflow:hidden;"><div class="t" style="left:32px;top:35px;font-size:11px;line-height:11px;color:#1e1e1e;letter-spacing:-0.15px;">Altura</div><div class="a" style="left:96px;top:30px;width:110px;height:20px;background:#ffffff;border:1px solid #b4b4b4;box-sizing:border-box;"></div><div class="a" style="left:189px;top:30px;width:17px;height:20px;background:#f0f0f0;border:1px solid #b4b4b4;box-sizing:border-box;"></div><div class="a" style="left:190px;top:39px;width:15px;height:1px;background:#d0d0d0;"></div><svg class="a" style="left:193px;top:33px;" width="9" height="14" viewBox="0 0 9 14"><path d="M0.5 4.5l4-4 4 4z" fill="#707070"/><path d="M0.5 9.5h8l-4 4z" fill="#707070"/></svg><div class="t" style="left:100px;top:35px;font-size:11px;line-height:11px;color:#1e1e1e;letter-spacing:0px;">0</div><div class="t" style="left:32px;top:59px;font-size:11px;line-height:11px;color:#1e1e1e;letter-spacing:-0.15px;">Apresentar...</div><div class="a" style="left:144px;top:57px;width:13px;height:13px;background:#ffffff;border:1px solid #9a9a9a;box-sizing:border-box;"></div><div class="t" style="left:32px;top:82px;font-size:11px;line-height:11px;color:#1e1e1e;letter-spacing:-0.15px;">Apresentar...</div><div class="a" style="left:144px;top:80px;width:13px;height:13px;background:#ffffff;border:1px solid #9a9a9a;box-sizing:border-box;"></div><svg class="a" style="left:146px;top:83px;" width="9" height="7" viewBox="0 0 9 7"><path d="M0.7 3.5l2.6 2.6 5-5.4" stroke="#555" stroke-width="1.2" fill="none"/></svg><div class="t" style="left:32px;top:105px;font-size:11px;line-height:11px;color:#1e1e1e;letter-spacing:-0.15px;">Cor da Fonte</div><div class="a" style="left:96px;top:100px;width:110px;height:20px;background:#ffffff;border:1px solid #b4b4b4;box-sizing:border-box;"></div><div class="a" style="left:189px;top:100px;width:17px;height:20px;background:#f0f0f0;border:1px solid #b4b4b4;box-sizing:border-box;"></div><svg class="a" style="left:193px;top:108px;" width="9" height="5" viewBox="0 0 9 5"><path d="M0 0h9l-4.5 5z" fill="#707070"/></svg><div class="a" style="left:102px;top:106px;width:23px;height:10px;background:#ffffff;border:1px solid #333333;box-sizing:border-box;"></div><div class="t" style="left:32px;top:129px;font-size:11px;line-height:11px;color:#1e1e1e;letter-spacing:-0.15px;">Filtros Com...</div><div class="a" style="left:144px;top:127px;width:13px;height:13px;background:#ffffff;border:1px solid #9a9a9a;box-sizing:border-box;"></div><div class="t" style="left:32px;top:152px;font-size:11px;line-height:11px;color:#1e1e1e;letter-spacing:-0.15px;">Fonte</div><div class="a" style="left:96px;top:147px;width:110px;height:20px;background:#ffffff;border:1px solid #b4b4b4;box-sizing:border-box;"></div><div class="a" style="left:189px;top:147px;width:17px;height:20px;background:#f0f0f0;border:1px solid #b4b4b4;box-sizing:border-box;"></div><svg class="a" style="left:192px;top:156px;" width="11" height="2" viewBox="0 0 11 2"><rect x="0" y="0" width="2" height="2" fill="#333"/><rect x="4" y="0" width="2" height="2" fill="#333"/><rect x="8" y="0" width="2" height="2" fill="#333"/></svg><div class="t" style="left:32px;top:176px;font-size:11px;line-height:11px;color:#1e1e1e;letter-spacing:-0.15px;">Largura</div><div class="a" style="left:96px;top:171px;width:110px;height:20px;background:#ffffff;border:1px solid #b4b4b4;box-sizing:border-box;"></div><div class="a" style="left:189px;top:171px;width:17px;height:20px;background:#f0f0f0;border:1px solid #b4b4b4;box-sizing:border-box;"></div><div class="a" style="left:190px;top:180px;width:15px;height:1px;background:#d0d0d0;"></div><svg class="a" style="left:193px;top:174px;" width="9" height="14" viewBox="0 0 9 14"><path d="M0.5 4.5l4-4 4 4z" fill="#707070"/><path d="M0.5 9.5h8l-4 4z" fill="#707070"/></svg><div class="t" style="left:100px;top:176px;font-size:11px;line-height:11px;color:#1e1e1e;letter-spacing:0px;">200</div><div class="t" style="left:32px;top:200px;font-size:11px;line-height:11px;color:#1e1e1e;letter-spacing:-0.15px;">Largura Au...</div><div class="a" style="left:144px;top:198px;width:13px;height:13px;background:#ffffff;border:1px solid #9a9a9a;box-sizing:border-box;"></div><div class="t" style="left:32px;top:223px;font-size:11px;line-height:11px;color:#1e1e1e;letter-spacing:-0.15px;">Mostrar Bo...</div><div class="a" style="left:144px;top:221px;width:13px;height:13px;background:#ffffff;border:1px solid #9a9a9a;box-sizing:border-box;"></div><div class="t" style="left:32px;top:246px;font-size:11px;line-height:11px;color:#1e1e1e;letter-spacing:-0.15px;">Ocultar De...</div><div class="a" style="left:144px;top:244px;width:13px;height:13px;background:#ffffff;border:1px solid #9a9a9a;box-sizing:border-box;"></div><div class="t" style="left:32px;top:270px;font-size:11px;line-height:11px;color:#1e1e1e;letter-spacing:-0.15px;">Ordenação</div><div class="a" style="left:96px;top:265px;width:110px;height:20px;background:#ffffff;border:1px solid #b4b4b4;box-sizing:border-box;"></div><div class="a" style="left:189px;top:265px;width:17px;height:20px;background:#f0f0f0;border:1px solid #b4b4b4;box-sizing:border-box;"></div><svg class="a" style="left:193px;top:273px;" width="9" height="5" viewBox="0 0 9 5"><path d="M0 0h9l-4.5 5z" fill="#707070"/></svg><div class="t" style="left:100px;top:270px;font-size:11px;line-height:11px;color:#1e1e1e;letter-spacing:0px;">Asc</div></div><div class="a" style="left:1180px;top:581px;width:2px;height:2px;background:#505050;"></div><div class="a" style="left:1184px;top:581px;width:2px;height:2px;background:#505050;"></div><div class="a" style="left:1188px;top:581px;width:2px;height:2px;background:#505050;"></div><div class="a" style="left:1192px;top:581px;width:2px;height:2px;background:#505050;"></div><div class="a" style="left:1196px;top:581px;width:2px;height:2px;background:#505050;"></div><div class="a" style="left:1079px;top:588px;width:221px;height:51px;border:1px solid #b4b4b4;box-sizing:border-box;"></div><div class="a" style="left:1146px;top:647px;width:75px;height:23px;background:#f0f0f0;border:1px solid #a8a8a8;box-sizing:border-box;"></div><svg class="a" style="left:1151px;top:652px;" width="14" height="11" viewBox="0 0 14 11"><path d="M1 5.5l4 4 8-8" stroke="#6aa58a" stroke-width="2" fill="none"/></svg><div class="t" style="left:1169px;top:654px;font-size:11px;line-height:11px;color:#1e1e1e;letter-spacing:-0.3px;">Confirmar</div><div class="a" style="left:1227px;top:647px;width:75px;height:23px;background:#f0f0f0;border:1px solid #a8a8a8;box-sizing:border-box;"></div><svg class="a" style="left:1232px;top:651px;" width="14" height="13" viewBox="0 0 14 13"><path d="M3.5 5.5a5 5 0 1 1 6.5 7" stroke="#3c78c8" stroke-width="2" fill="none"/><path d="M0.5 1.5v6h6z" fill="#3c78c8"/></svg><div class="t" style="left:1253px;top:654px;font-size:11px;line-height:11px;color:#1e1e1e;letter-spacing:-0.46px;">Cancelar</div><div class="a" style="left:226px;top:92px;width:257px;height:41px;border:3px solid #ff8000;box-sizing:border-box;border-radius:2px;"></div><div class="a" style="left:492px;top:91px;width:454px;height:25px;border:3px solid #ff8000;box-sizing:border-box;border-radius:2px;"></div><div class="a" style="left:479px;top:499px;width:157px;height:63px;border:3px solid #ff8000;box-sizing:border-box;border-radius:2px;"></div><div class="a" style="left:270px;top:674px;width:63px;height:31px;border:3px solid #ff8000;box-sizing:border-box;border-radius:2px;"></div><svg class="a" style="left:0;top:0" width="1307" height="711" viewBox="0 0 1307 711"><line x1="299" y1="672.5" x2="292.6" y2="150.0" stroke="#ff8000" stroke-width="3"/><path d="M292.5 138L297.2 151.9L288.2 152.1z" fill="#ff8000"/><line x1="503.5" y1="119.5" x2="344.8" y2="669.5" stroke="#ff8000" stroke-width="3"/><path d="M341.5 681L341.1 666.3L349.7 668.8z" fill="#ff8000"/><line x1="328.5" y1="136" x2="579.0" y2="482.3" stroke="#ff8000" stroke-width="3"/><path d="M586 492L574.1 483.3L581.4 478.0z" fill="#ff8000"/></svg>
</body></html>
